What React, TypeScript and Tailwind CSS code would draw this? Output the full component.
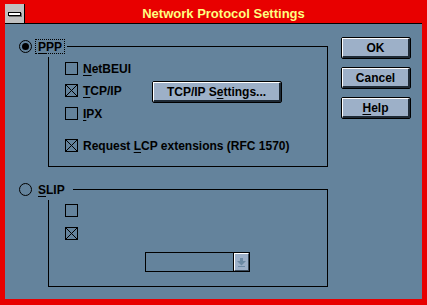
import React from "react";

const Radio = ({ checked }: { checked?: boolean }) => (
  <div className="w-[13px] h-[13px] rounded-full border border-black flex items-center justify-center shrink-0">
    {checked && <div className="w-[7px] h-[7px] rounded-full bg-black" />}
  </div>
);

const Check = ({ checked }: { checked?: boolean }) => (
  <div className="w-[13px] h-[13px] border border-black shrink-0">
    {checked && (
      <svg width="11" height="11" viewBox="0 0 11 11" className="block">
        <path d="M0 0L11 11M11 0L0 11" stroke="black" strokeWidth="1" />
      </svg>
    )}
  </div>
);

const Btn = ({ children, className = "" }: { children: React.ReactNode; className?: string }) => (
  <div className={`h-[22px] rounded-[2px] border border-black bg-[#9db0c8] shrink-0 ${className}`}>
    <div className="h-full border-t border-l border-t-white border-l-white border-b-2 border-r-2 border-b-[#1e2a36] border-r-[#1e2a36] flex items-center justify-center">
      {children}
    </div>
  </div>
);

const Row = ({ checked, children }: { checked?: boolean; children: React.ReactNode }) => (
  <div className="h-[13px] flex items-center">
    <Check checked={checked} />
    <span className="ml-[5px] leading-none">{children}</span>
  </div>
);

const U = ({ children }: { children: React.ReactNode }) => (
  <span className="underline decoration-1 underline-offset-[2px]">{children}</span>
);

export default function App() {
  return (
    <div className="w-[427px] h-[305px] bg-[#e80000] pt-[4px] px-[5px] pb-[6px] flex flex-col font-['Liberation_Sans',Arial,sans-serif] font-bold text-[12px] text-black">
      {/* title bar */}
      <div className="h-[20px] flex border-b border-black shrink-0">
        <div className="w-[20px] bg-[#c0c0c0] border-r border-black flex items-center justify-center">
          <div className="w-[13px] h-[4px] border border-black bg-white shadow-[1px_1px_0_#707070]" />
        </div>
        <div className="flex-1 flex items-center justify-center pt-[1px] text-[13px] text-[#ffff80]">
          Network Protocol Settings
        </div>
      </div>

      <div className="flex-1 bg-[#64839c] flex">
        {/* groups */}
        <div className="w-[323px] pl-[14px] pt-[15px] flex flex-col">
          <div className="h-[15px] flex items-center">
            <Radio checked />
            <div className="ml-[3px] h-[15px] border border-dotted border-black px-[2px] flex items-center leading-none">
              <U>P</U>PP
            </div>
            <div className="ml-[2px] flex-1 self-end h-[8px] border-t border-r border-black" />
          </div>
          <div className="ml-[29px] h-[113px] border-r border-b border-black flex flex-col">
            <div className="mt-[3px] flex-1 border-l border-black pl-[16px] pt-[5px] flex flex-col">
              <Row>
                <U>N</U>etBEUI
              </Row>
              <div className="mt-[9px] h-[13px] flex items-center">
                <Check checked />
                <span className="ml-[5px] w-[69px] leading-none">
                  <U>T</U>CP/IP
                </span>
                <Btn className="w-[130px] mt-[3px]">
                  <span>
                    TCP/IP S<U>e</U>ttings...
                  </span>
                </Btn>
              </div>
              <div className="mt-[10px]">
                <Row>
                  <U>I</U>PX
                </Row>
              </div>
              <div className="mt-[19px]">
                <Row checked>
                  Request <U>L</U>CP extensions (RFC 1570)
                </Row>
              </div>
            </div>
          </div>

          <div className="mt-[15px] h-[15px] flex items-center">
            <Radio />
            <div className="ml-[3px] h-[15px] border border-transparent px-[2px] flex items-center leading-none">
              <U>S</U>LIP
            </div>
            <div className="ml-[5px] flex-1 self-end h-[8px] border-t border-r border-black" />
          </div>
          <div className="ml-[29px] h-[90px] border-r border-b border-black flex flex-col">
            <div className="mt-[3px] flex-1 border-l border-black pl-[16px] pt-[4px] flex flex-col">
              <Check />
              <div className="mt-[10px]">
                <Check checked />
              </div>
              <div className="mt-[12px] ml-[80px] h-[20px] flex">
                <div className="w-[88px] border-y border-l border-black" />
                <div className="w-[17px] border border-black bg-[#9db0c8]">
                  <div className="h-full border-t border-l border-white border-b border-r border-b-[#3a4a5a] border-r-[#3a4a5a] flex items-center justify-center">
                    <svg width="9" height="9" viewBox="0 0 9 9">
                      <rect x="3" y="0" width="3" height="3" fill="#6c8aa4" />
                      <path d="M0 3H9L4.5 7.5Z" fill="#6c8aa4" />
                      <rect x="1" y="8" width="7" height="1" fill="#6c8aa4" />
                    </svg>
                  </div>
                </div>
              </div>
            </div>
          </div>
        </div>

        {/* buttons */}
        <div className="ml-[13px] pt-[13px] flex flex-col gap-[8px]">
          <Btn className="w-[70px]">OK</Btn>
          <Btn className="w-[70px]">Cancel</Btn>
          <Btn className="w-[70px]">
            <span>
              <U>H</U>elp
            </span>
          </Btn>
        </div>
      </div>
    </div>
  );
}
